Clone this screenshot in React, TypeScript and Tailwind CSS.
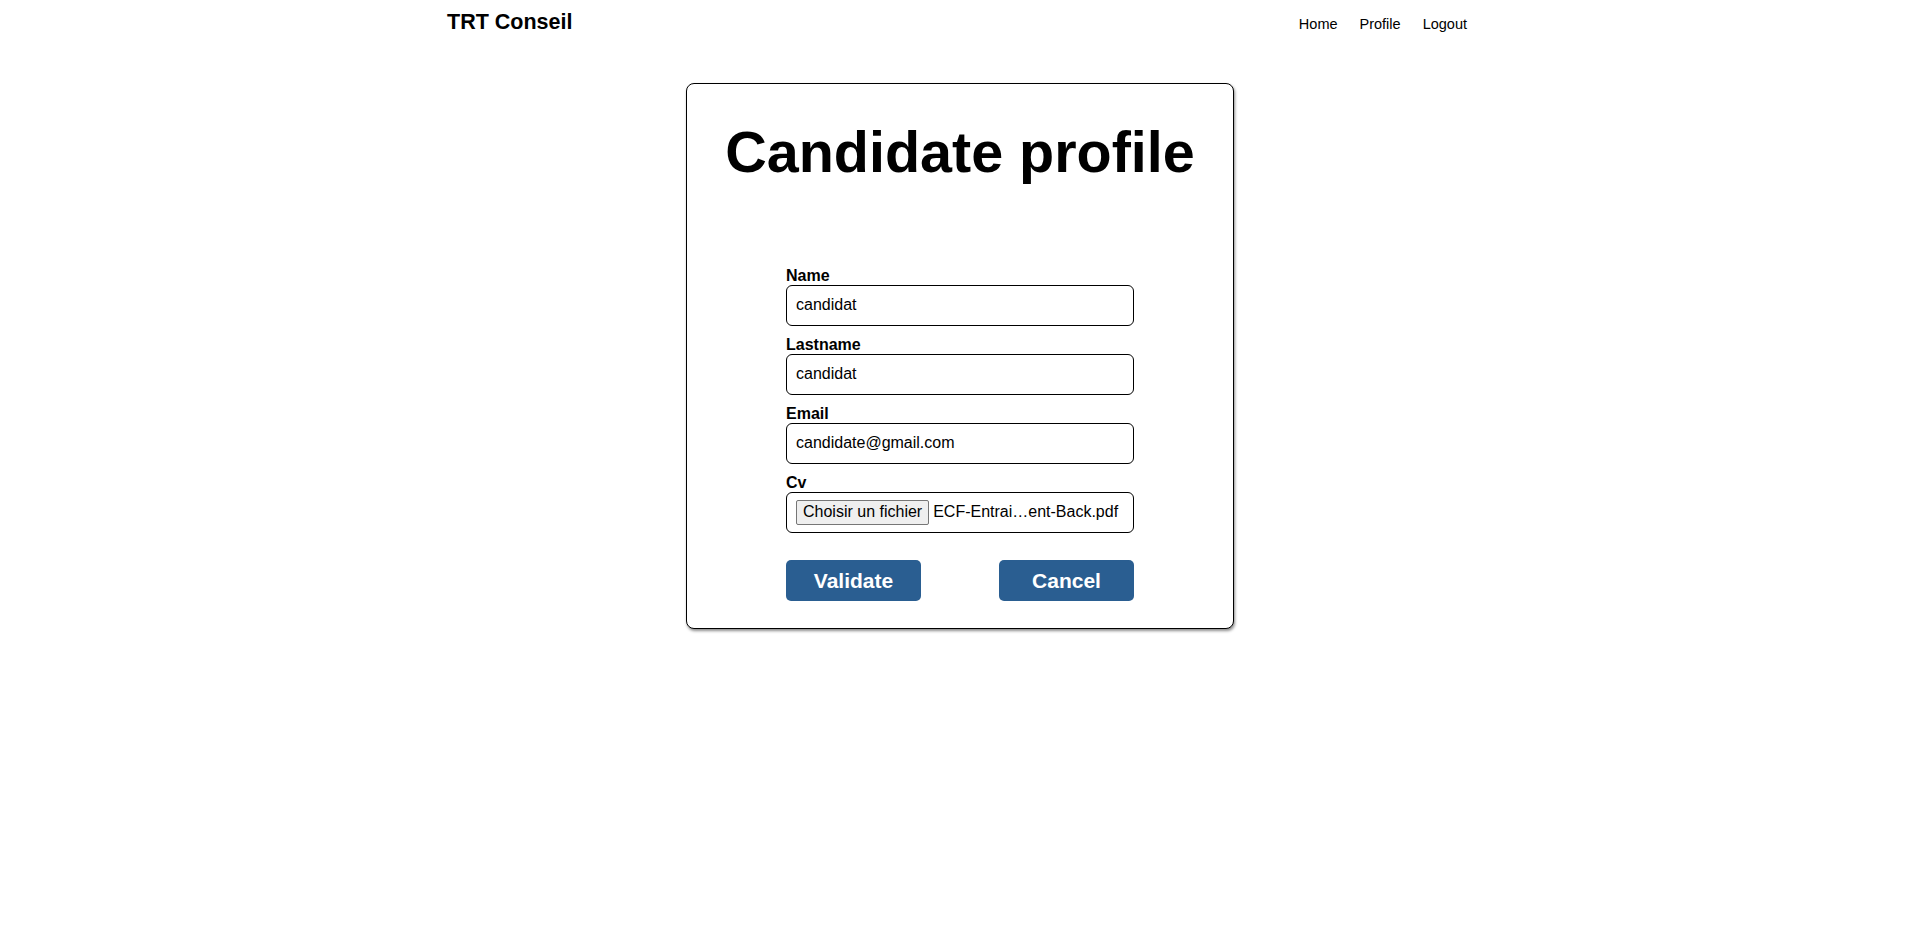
import { useState } from 'react';

const Field = ({ label, value, onChange }: { label: string; value: string; onChange: (v: string) => void }) => (
  <div className="flex flex-col">
    <label className="text-[16px] font-bold leading-[19px] text-black">{label}</label>
    <input
      value={value}
      onChange={(e) => onChange(e.target.value)}
      className="h-[41px] w-full rounded-[6px] border border-black bg-white px-[9px] text-[16px] text-black outline-none"
    />
  </div>
);

const App = () => {
  const [name, setName] = useState('candidat');
  const [lastname, setLastname] = useState('candidat');
  const [email, setEmail] = useState('candidate@gmail.com');

  return (
    <div className="min-h-screen bg-white text-black" style={{ fontFamily: '"Liberation Sans", Arial, sans-serif' }}>
      {/* Navbar */}
      <header className="mx-auto flex w-[1032px] items-baseline justify-between pl-[3px] pr-[9px] pt-[10px]">
        <a href="#" className="text-[21.5px] font-bold leading-[24px] text-black">
          TRT Conseil
        </a>
        <nav className="flex items-baseline gap-[22px] text-[14.5px] text-black">
          <a href="#">Home</a>
          <a href="#">Profile</a>
          <a href="#">Logout</a>
        </nav>
      </header>

      {/* Profile card */}
      <main className="mt-[47px] flex justify-center">
        <div className="w-[548px] rounded-[8px] border border-black bg-white pt-[35px] pb-[27px] shadow-[1px_2px_3px_rgba(0,0,0,0.45)]">
          <h1 className="text-center text-[57.5px] font-bold leading-[66px]">Candidate profile</h1>

          <form className="mx-auto mt-[81px] flex w-[348px] flex-col gap-[9px]" onSubmit={(e) => e.preventDefault()}>
            <Field label="Name" value={name} onChange={setName} />
            <Field label="Lastname" value={lastname} onChange={setLastname} />
            <Field label="Email" value={email} onChange={setEmail} />

            <div className="flex flex-col">
              <label className="text-[16px] font-bold leading-[19px] text-black">Cv</label>
              <div className="flex h-[41px] w-full items-center rounded-[6px] border border-black bg-white pl-[9px] text-[16px]">
                <span className="flex h-[25px] items-center rounded-[2px] border border-[#767676] bg-[#efefef] px-[6px] leading-none text-black">
                  Choisir un fichier
                </span>
                <span className="ml-[4px] whitespace-nowrap">ECF-Entrai…ent-Back.pdf</span>
              </div>
            </div>

            <div className="mt-[18px] flex justify-between">
              <button
                type="submit"
                className="h-[41px] w-[135px] rounded-[5px] bg-[#2a5e91] text-[21px] font-bold text-white"
              >
                Validate
              </button>
              <button
                type="button"
                className="h-[41px] w-[135px] rounded-[5px] bg-[#2a5e91] text-[21px] font-bold text-white"
              >
                Cancel
              </button>
            </div>
          </form>
        </div>
      </main>
    </div>
  );
};

export default App;
